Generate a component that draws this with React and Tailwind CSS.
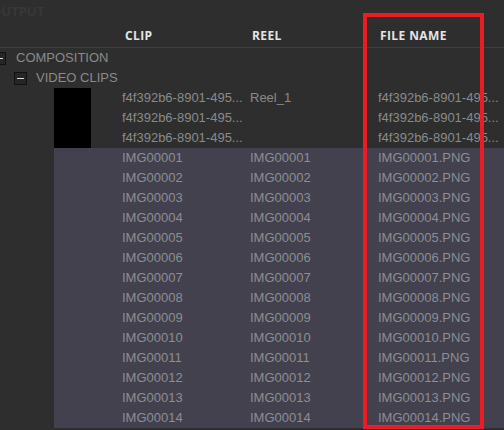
const clipRows = ['f4f392b6-8901-495...', 'f4f392b6-8901-495...', 'f4f392b6-8901-495...'];
const images = Array.from({length: 14}, (_, i) => `IMG${String(i + 1).padStart(5, '0')}`);

function Toggle() {
  return (
    <span className="flex h-[13px] w-[13px] shrink-0 items-center justify-center border border-[#111] bg-[#262626]">
      <span className="h-px w-[7px] bg-[#d8d8d8]"></span>
    </span>
  );
}

export default function App() {
  return (
    <div className="relative h-[430px] w-[504px] overflow-hidden bg-[#2e2e2e] font-['Liberation_Sans',Arial,sans-serif] text-[13px] text-[#8a8a8a]">
      <div className="absolute left-[-9px] top-[3px] font-['Open_Sans',sans-serif] text-[13px] font-bold leading-[16px] text-[#383838]">
        OUTPUT
      </div>

      <div className="flex h-[48px] items-end border-b border-[#3e3e3e] pb-[3px] pl-[125px] font-['Open_Sans',sans-serif] text-[12px] font-bold leading-[16px] tracking-[0.4px] text-[#e4e4e4]">
        <span className="w-[127px] shrink-0">CLIP</span>
        <span className="w-[128px] shrink-0">REEL</span>
        <span>FILE NAME</span>
      </div>

      <div className="flex h-[20px] items-center gap-[10px]">
        <span className="-ml-[7px]"><Toggle /></span>
        <span>COMPOSITION</span>
      </div>
      <div className="flex h-[20px] items-center gap-[9px] pl-[14px]">
        <Toggle />
        <span>VIDEO CLIPS</span>
      </div>

      <div className="flex pl-[54px]">
        <div className="h-[60px] w-[37px] shrink-0 bg-black"></div>
        <div className="flex flex-col pl-[31px]">
          {clipRows.map((c, i) => (
            <div key={i} className="flex h-[20px] items-center">
              <span className="w-[128px] shrink-0">{c}</span>
              <span className="w-[128px] shrink-0">{i === 0 ? 'Reel_1' : ''}</span>
              <span className="whitespace-nowrap">{c}</span>
            </div>
          ))}
        </div>
      </div>

      <div className="ml-[54px] bg-[#42414d] pl-[68px] text-[#8d8d94]">
        {images.map(name => (
          <div key={name} className="flex h-[20px] items-center">
            <span className="w-[128px] shrink-0">{name}</span>
            <span className="w-[128px] shrink-0">{name}</span>
            <span>{name}.PNG</span>
          </div>
        ))}
      </div>

      <div className="absolute left-[363px] top-[13px] h-[416px] w-[121px] border-4 border-[#ec1c24]"></div>
    </div>
  );
}
